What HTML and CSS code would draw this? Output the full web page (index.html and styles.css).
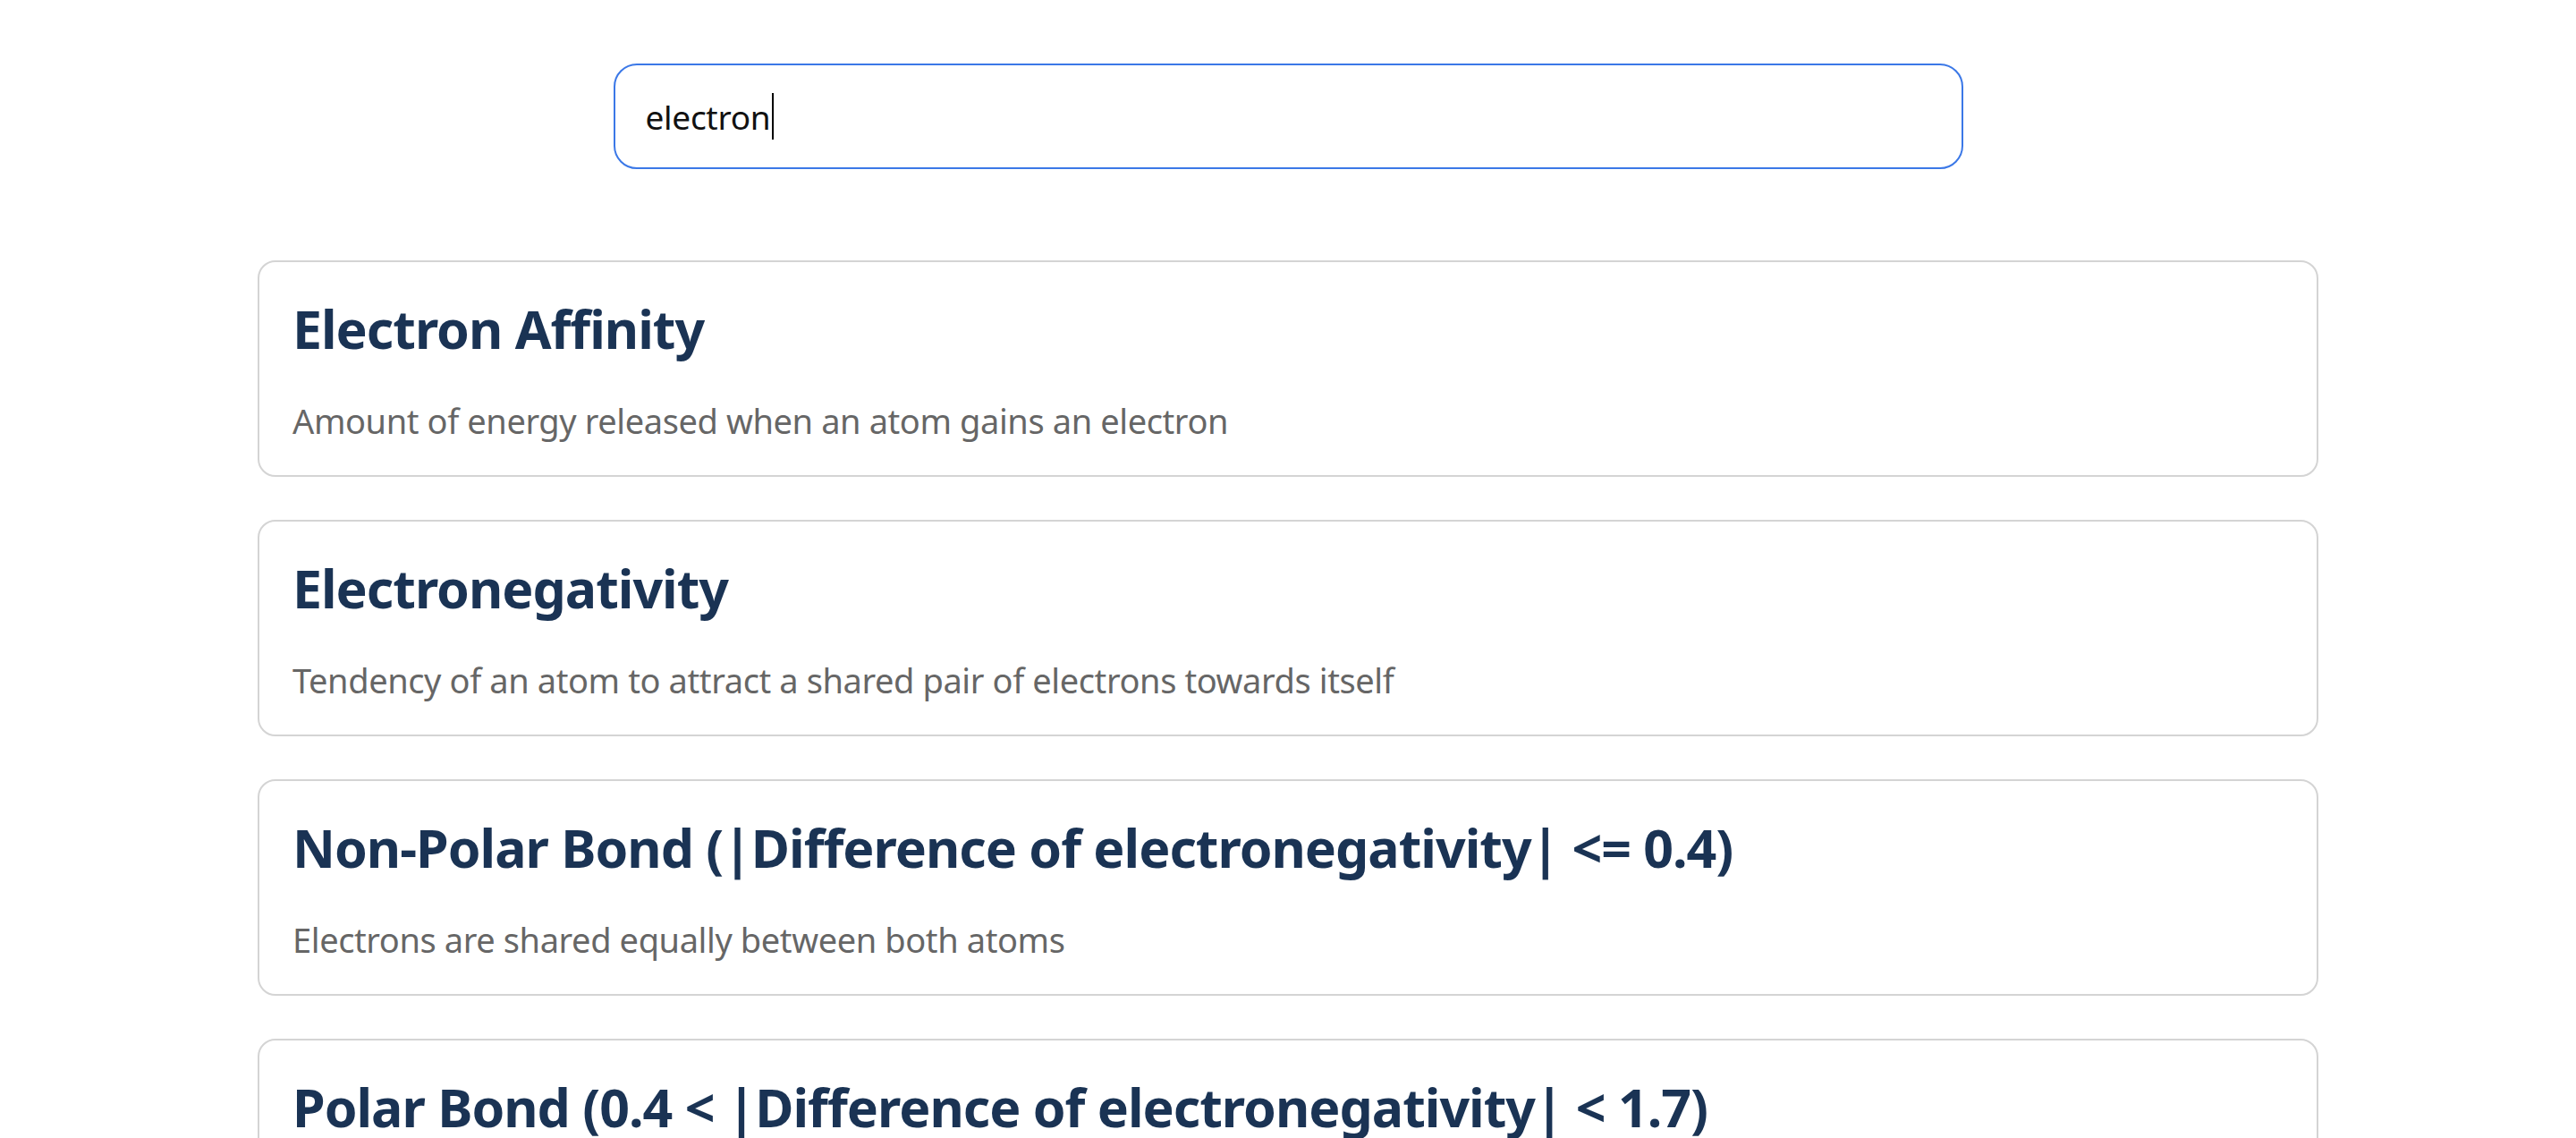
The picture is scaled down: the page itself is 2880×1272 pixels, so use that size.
FILE: index.html
```html
<!DOCTYPE html>
<html lang="en">
<head>
<meta charset="utf-8">
<title>Glossary search</title>
<link rel="stylesheet" href="styles.css">
</head>
<body>
<main class="page">
  <div class="search" role="textbox" aria-label="Search">
    <span class="query">electron</span><span class="caret"></span>
  </div>
  <section class="results">
    <article class="card">
      <h2 class="card-title">Electron Affinity</h2>
      <p class="card-desc">Amount of energy released when an atom gains an electron</p>
    </article>
    <article class="card">
      <h2 class="card-title">Electronegativity</h2>
      <p class="card-desc">Tendency of an atom to attract a shared pair of electrons towards itself</p>
    </article>
    <article class="card">
      <h2 class="card-title">Non-Polar Bond (|Difference of electronegativity| &lt;= 0.4)</h2>
      <p class="card-desc">Electrons are shared equally between both atoms</p>
    </article>
    <article class="card">
      <h2 class="card-title">Polar Bond (0.4 &lt; |Difference of electronegativity| &lt; 1.7)</h2>
      <p class="card-desc">Electrons are shared unequally between both atoms</p>
    </article>
  </section>
</main>
</body>
</html>
```

FILE: styles.css
```css
* { box-sizing: border-box; }
html, body { margin: 0; padding: 0; background: #ffffff; }
body { font-family: "Noto Sans", "Open Sans", sans-serif; }

.page {
  display: flex;
  flex-direction: column;
  align-items: center;
  padding-top: 71px;
}

.search {
  width: 1509px;
  height: 118px;
  border: 2px solid #3b78e7;
  border-radius: 26px;
  padding: 0 34px;
  display: flex;
  align-items: center;
  font-size: 37px;
  letter-spacing: -0.3px;
  color: #111111;
}
.caret {
  display: inline-block;
  width: 2px;
  height: 52px;
  background: #000000;
  margin-left: 2px;
}

.results {
  width: 2304px;
  margin-top: 102px;
  display: flex;
  flex-direction: column;
  gap: 48px;
}

.card {
  border: 2px solid #d4d4d4;
  border-radius: 20px;
  padding: 37px 37px;
  height: 242px;
}
.card-title {
  margin: 0;
  font-size: 59px;
  line-height: 74px;
  letter-spacing: -1px;
  font-weight: 700;
  color: #1a3354;
}
.card-desc {
  margin: 43px 0 0;
  font-size: 38px;
  line-height: 46px;
  letter-spacing: -0.4px;
  color: #666666;
}
```
